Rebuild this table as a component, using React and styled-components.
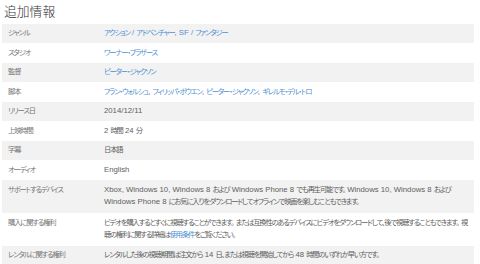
import React from 'react';
import styled, { createGlobalStyle } from 'styled-components';

const GlobalStyle = createGlobalStyle`
  html, body {
    margin: 0;
    padding: 0;
    background: #fff;
  }
  body {
    font-family: "Liberation Sans", "Noto Sans CJK JP", sans-serif;
  }
`;

const Page = styled.div`
  width: 480px;
  height: 264px;
  overflow: hidden;
  padding: 0 6px 0 2px;
  box-sizing: border-box;
`;

const Title = styled.h2`
  margin: 0;
  padding: 3px 0 0 2px;
  height: 23.5px;
  box-sizing: border-box;
  font-family: "Noto Sans CJK JP", sans-serif;
  font-weight: 300;
  font-size: 12.8px;
  line-height: 16px;
  color: #333;
`;

const Table = styled.div`
  display: flex;
  flex-direction: column;
`;

const Row = styled.div`
  display: grid;
  grid-template-columns: 102px 1fr;
  padding: ${p => (p.$tall ? '4px 0' : '3.5px 0')};
  background: ${p => (p.$shaded ? '#f2f2f2' : 'transparent')};
  font-size: 7.75px;
  line-height: 12.5px;
`;

const Label = styled.div`
  padding-left: 6px;
  color: #777;
`;

const Value = styled.div`
  color: #606060;
  padding-right: 8px;
`;

const Line = styled.span`
  display: block;
  white-space: nowrap;
`;

const Link = styled.a`
  color: #4f8fd2;
  text-decoration: none;
`;

// Japanese glyphs in the shot render narrower than the Latin ones
const Ja = styled.span`
  font-family: "Noto Sans CJK JP", sans-serif;
  font-feature-settings: "palt";
  font-size: 7.3px;
  line-height: 1;
  letter-spacing: -1.15px;
`;

const CJK = /([\u3000-\u30ff\u4e00-\u9fff\uff00-\uffef]+)/;

const jp = text =>
  text.split(CJK).map((part, i) =>
    i % 2 === 1 ? <Ja key={i}>{part}</Ja> : part
  );

const rows = [
  { label: 'ジャンル', value: <><Link>{jp('アクション / アドベンチャー')}</Link>, <Link>{jp('SF / ファンタジー')}</Link></> },
  { label: 'スタジオ', value: <Link>{jp('ワーナー・ブラザース')}</Link> },
  { label: '監督', value: <Link>{jp('ピーター・ジャクソン')}</Link> },
  {
    label: '脚本',
    value: (
      <>
        <Link>{jp('フラン・ウォルシュ')}</Link>, <Link>{jp('フィリッパ・ボウエン')}</Link>, <Link>{jp('ピーター・ジャクソン')}</Link>, <Link>{jp('ギレルモ・デル・トロ')}</Link>
      </>
    ),
  },
  { label: 'リリース日', value: '2014/12/11' },
  { label: '上映時間', value: jp('2 時間 24 分') },
  { label: '字幕', value: jp('日本語') },
  { label: 'オーディオ', value: 'English' },
  {
    label: 'サポートするデバイス',
    tall: true,
    value: (
      <>
        <Line>{jp('Xbox, Windows 10, Windows 8 および Windows Phone 8 でも再生可能です。 Windows 10, Windows 8 および')}</Line>
        <Line>{jp('Windows Phone 8 にお気に入りをダウンロードしてオフラインで映画を楽しむこともできます。')}</Line>
      </>
    ),
  },
  {
    label: '購入に関する権利',
    tall: true,
    value: (
      <>
        <Line>{jp('ビデオを購入するとすぐに視聴することができます。 または互換性のあるデバイスにビデオをダウンロードして、後で視聴することもできます。 視')}</Line>
        <Line>{jp('聴の権利に関する詳細は')}<Link>{jp('使用条件')}</Link>{jp('をご覧ください。')}</Line>
      </>
    ),
  },
  {
    label: 'レンタルに関する権利',
    value: jp('レンタルした後の視聴期間は注文から 14 日、または視聴を開始してから 48 時間のいずれか早い方です。'),
  },
];

export default function App() {
  return (
    <Page>
      <GlobalStyle />
      <Title>追加情報</Title>
      <Table>
        {rows.map((r, i) => (
          <Row key={r.label} $shaded={i % 2 === 0} $tall={r.tall}>
            <Label>{jp(r.label)}</Label>
            <Value>{r.value}</Value>
          </Row>
        ))}
      </Table>
    </Page>
  );
}
